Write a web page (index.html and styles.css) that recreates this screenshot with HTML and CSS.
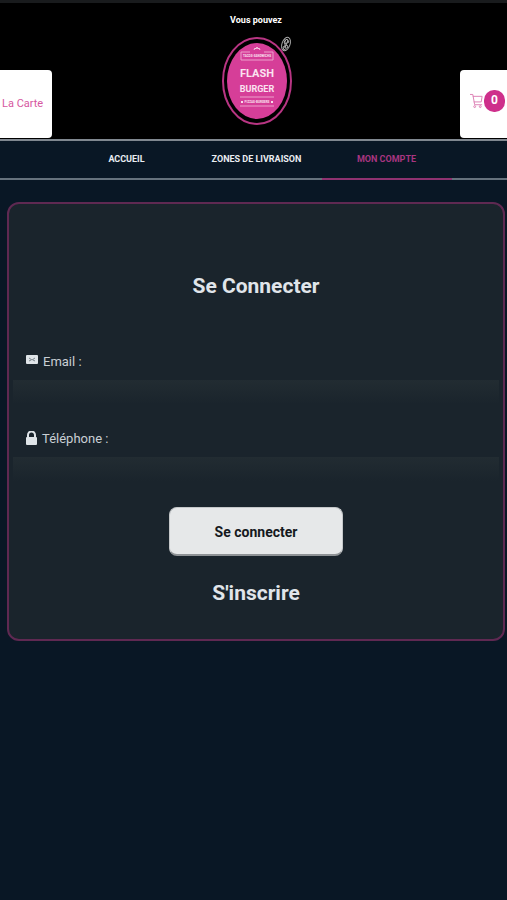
FILE: index.html
```html
<!DOCTYPE html>
<html lang="fr">
<head>
    <meta charset="UTF-8">
    <meta name="viewport" content="width=device-width, initial-scale=1.0">
    <title>Flash Burger - Mon compte</title>
    <link rel="stylesheet" href="styles.css">
</head>
<body>
    <header class="header">
        <a href="#" class="side-box carte">La Carte</a>

        <div class="brand">
            <p class="message">Vous pouvez</p>
            <a href="#" aria-label="Flash Burger">
                <svg class="logo" width="74" height="90" viewBox="0 0 74 90">
                    <ellipse cx="38" cy="46" rx="34" ry="43" fill="#000" stroke="#b83583" stroke-width="2"/>
                    <ellipse cx="38" cy="46" rx="30" ry="38" fill="#d63e98"/>
                    <path d="M35 15l1-2 1 1 1-2 1 2 1-1 1 2" fill="none" stroke="#f6cfe5" stroke-width="1"/>
                    <path d="M22 17h9M45 17h9M22 25h32M22 17v8M54 17v8M21 62h34M21 71h34" fill="none" stroke="#eda0cb" stroke-width="1"/>
                    <g class="logo-text" text-anchor="middle">
                        <text x="38" y="22" font-size="3">TACOS-SANDWICHS</text>
                        <text x="38" y="42" font-size="11">FLASH</text>
                        <text x="38" y="57" font-size="9">BURGER</text>
                        <text x="38" y="68" font-size="3">PIZZAS-BURGERS</text>
                    </g>
                    <path d="M22 67h2M52 67h2" stroke="#f9dcec" stroke-width="2"/>
                    <g fill="none" stroke="#aaa" stroke-width="1">
                        <ellipse cx="67" cy="9" rx="4" ry="7" transform="rotate(20 67 9)"/>
                        <path d="M65 7l3-3 2 3-4 2zM64 12l4-2 1 2-4 3zM66 4v9M69 5l-3 8"/>
                    </g>
                </svg>
            </a>
        </div>

        <a href="#" class="side-box cart" aria-label="Panier">
            <svg width="15" height="18" viewBox="0 0 15 18" fill="none" stroke="#dc7cb2" stroke-width="1">
                <path d="M0 2h3l2 11h8M3 4h10l-1 6H4"/>
                <circle cx="5" cy="15" r="1"/>
                <circle cx="11" cy="15" r="1"/>
            </svg>
            <span class="badge">0</span>
        </a>
    </header>

    <nav class="nav">
        <a href="#">ACCUEIL</a>
        <a href="#">ZONES DE LIVRAISON</a>
        <a href="#" class="active">MON COMPTE</a>
    </nav>

    <main>
        <form class="login">
            <h1>Se Connecter</h1>

            <div class="field">
                <label for="email">
                    <svg width="12" height="14" viewBox="0 0 12 14">
                        <rect x="0" y="1" width="12" height="9" rx="1" fill="#dfe4e8"/>
                        <path d="M3 4l3 2 3-2M3 7l2-1M9 7L7 6" fill="none" stroke="#7b858c" stroke-width="1"/>
                    </svg>
                    Email :
                </label>
                <input type="email" id="email" name="email">
            </div>

            <div class="field">
                <label for="telephone">
                    <svg width="11" height="14" viewBox="0 0 11 14">
                        <path d="M2 7V4a3.500 3.500 0 0 1 7 0v3" fill="none" stroke="#dfe4e8" stroke-width="2"/>
                        <rect x="0" y="6" width="11" height="8" rx="1" fill="#dfe4e8"/>
                    </svg>
                    Téléphone :
                </label>
                <input type="tel" id="telephone" name="telephone">
            </div>

            <button type="submit">Se connecter</button>
            <a href="#" class="register">S'inscrire</a>
        </form>
    </main>
</body>
</html>
```

FILE: styles.css
```css
* {
    box-sizing: border-box;
}
body {
    margin: 0;
    min-height: 100vh;
    background-color: #091725;
    font-family: Roboto, "Liberation Sans", sans-serif;
    color: #e0e5ea;
}
a {
    color: inherit;
    text-decoration: none;
}

.header {
    display: flex;
    justify-content: space-between;
    align-items: flex-end;
    background-color: #000;
    border-top: 3px solid #191b1d;
    border-bottom: 2px solid #808890;
}
.side-box {
    display: flex;
    align-items: center;
    width: 52px;
    height: 68px;
    margin-bottom: 1px;
    background-color: #fff;
    border-radius: 0 4px 4px 0;
}
.carte {
    padding: 0 0 2px 2px;
    font-size: 11px;
    color: #d6579f;
}
.cart {
    width: 47px;
    padding: 0 2px 6px 10px;
    border-radius: 4px 0 0 4px;
}
.badge {
    width: 21px;
    height: 22px;
    flex-shrink: 0;
    border-radius: 10px;
    background-color: #ce2f8b;
    color: #fff;
    font-size: 12px;
    font-weight: bold;
    line-height: 21px;
    text-align: center;
}
.brand {
    text-align: center;
}
.message {
    margin: 12px 0 9px;
    font-size: 9px;
    line-height: 11px;
    font-weight: bold;
    color: #fff;
}
.logo {
    display: block;
    margin: 0 auto 14px;
}
.logo-text {
    fill: #fbe3f0;
    font-family: Roboto, sans-serif;
    font-weight: bold;
}

.nav {
    display: flex;
    justify-content: center;
    height: 39px;
    padding-left: 6px;
    border-bottom: 2px solid #66727d;
}
.nav a {
    width: 130px;
    height: 39px;
    border-bottom: 2px solid transparent;
    font-size: 9px;
    font-weight: bold;
    line-height: 37px;
    text-align: center;
    color: #e9edf2;
}
.nav .active {
    border-color: #8f3270;
    color: #a83580;
}

.login {
    display: flex;
    flex-direction: column;
    align-items: center;
    margin: 22px 2px 0 7px;
    padding: 68px 4px 32px;
    background-color: #1a242c;
    border: 2px solid #5f2952;
    border-radius: 12px;
}
h1,
.register {
    margin: 0;
    font-size: 21px;
    font-weight: bold;
    line-height: 28px;
}
h1 {
    margin-bottom: 49px;
}
.field {
    width: 100%;
    margin-bottom: 22px;
}
.field label {
    display: flex;
    align-items: center;
    gap: 5px;
    height: 24px;
    margin-bottom: 7px;
    padding-left: 13px;
    font-size: 13px;
    color: #c9cfd4;
}
.field input {
    display: block;
    width: 100%;
    height: 24px;
    padding: 0 12px;
    border: none;
    outline: none;
    background: linear-gradient(#222c32, #1a242c);
    color: #e0e5ea;
    font: inherit;
}
.login button {
    width: 174px;
    height: 49px;
    margin: 4px 0 23px;
    padding: 2px 0 0;
    border: 1px solid #c4c7c9;
    border-bottom: 2px solid #8e9295;
    border-radius: 8px;
    background-color: #e6e8e9;
    color: #15191d;
    font-family: inherit;
    font-size: 14px;
    font-weight: bold;
    cursor: pointer;
}
```
